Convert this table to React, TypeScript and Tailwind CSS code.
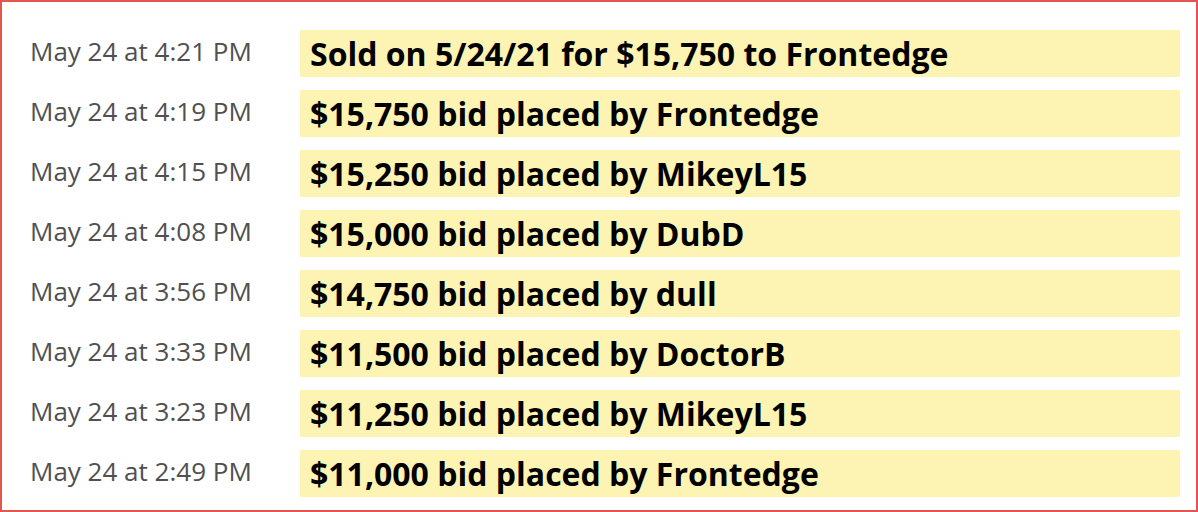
const bids = [
  { time: "May 24 at 4:21 PM", text: "Sold on 5/24/21 for $15,750 to Frontedge" },
  { time: "May 24 at 4:19 PM", text: "$15,750 bid placed by Frontedge" },
  { time: "May 24 at 4:15 PM", text: "$15,250 bid placed by MikeyL15" },
  { time: "May 24 at 4:08 PM", text: "$15,000 bid placed by DubD" },
  { time: "May 24 at 3:56 PM", text: "$14,750 bid placed by dull" },
  { time: "May 24 at 3:33 PM", text: "$11,500 bid placed by DoctorB" },
  { time: "May 24 at 3:23 PM", text: "$11,250 bid placed by MikeyL15" },
  { time: "May 24 at 2:49 PM", text: "$11,000 bid placed by Frontedge" },
];

const App = () => {
  return (
    <div
      className="h-[512px] w-[1198px] border-2 border-[#e4554d] bg-white pt-[28px] pr-[16px] pb-[13px] pl-[28px]"
      style={{ fontFamily: '"Open Sans", sans-serif' }}
    >
      <div className="flex flex-col gap-[13px]">
        {bids.map((bid) => (
          <div key={bid.time} className="flex items-center">
            <div className="w-[270px] shrink-0 -mt-[5px] text-[26px] leading-none text-[#505050]">
              {bid.time}
            </div>
            <div className="flex h-[47px] flex-1 items-center bg-[#fdf4b3] pl-[10px] text-[32px] font-bold leading-none text-black">
              {bid.text}
            </div>
          </div>
        ))}
      </div>
    </div>
  );
};

export default App;
